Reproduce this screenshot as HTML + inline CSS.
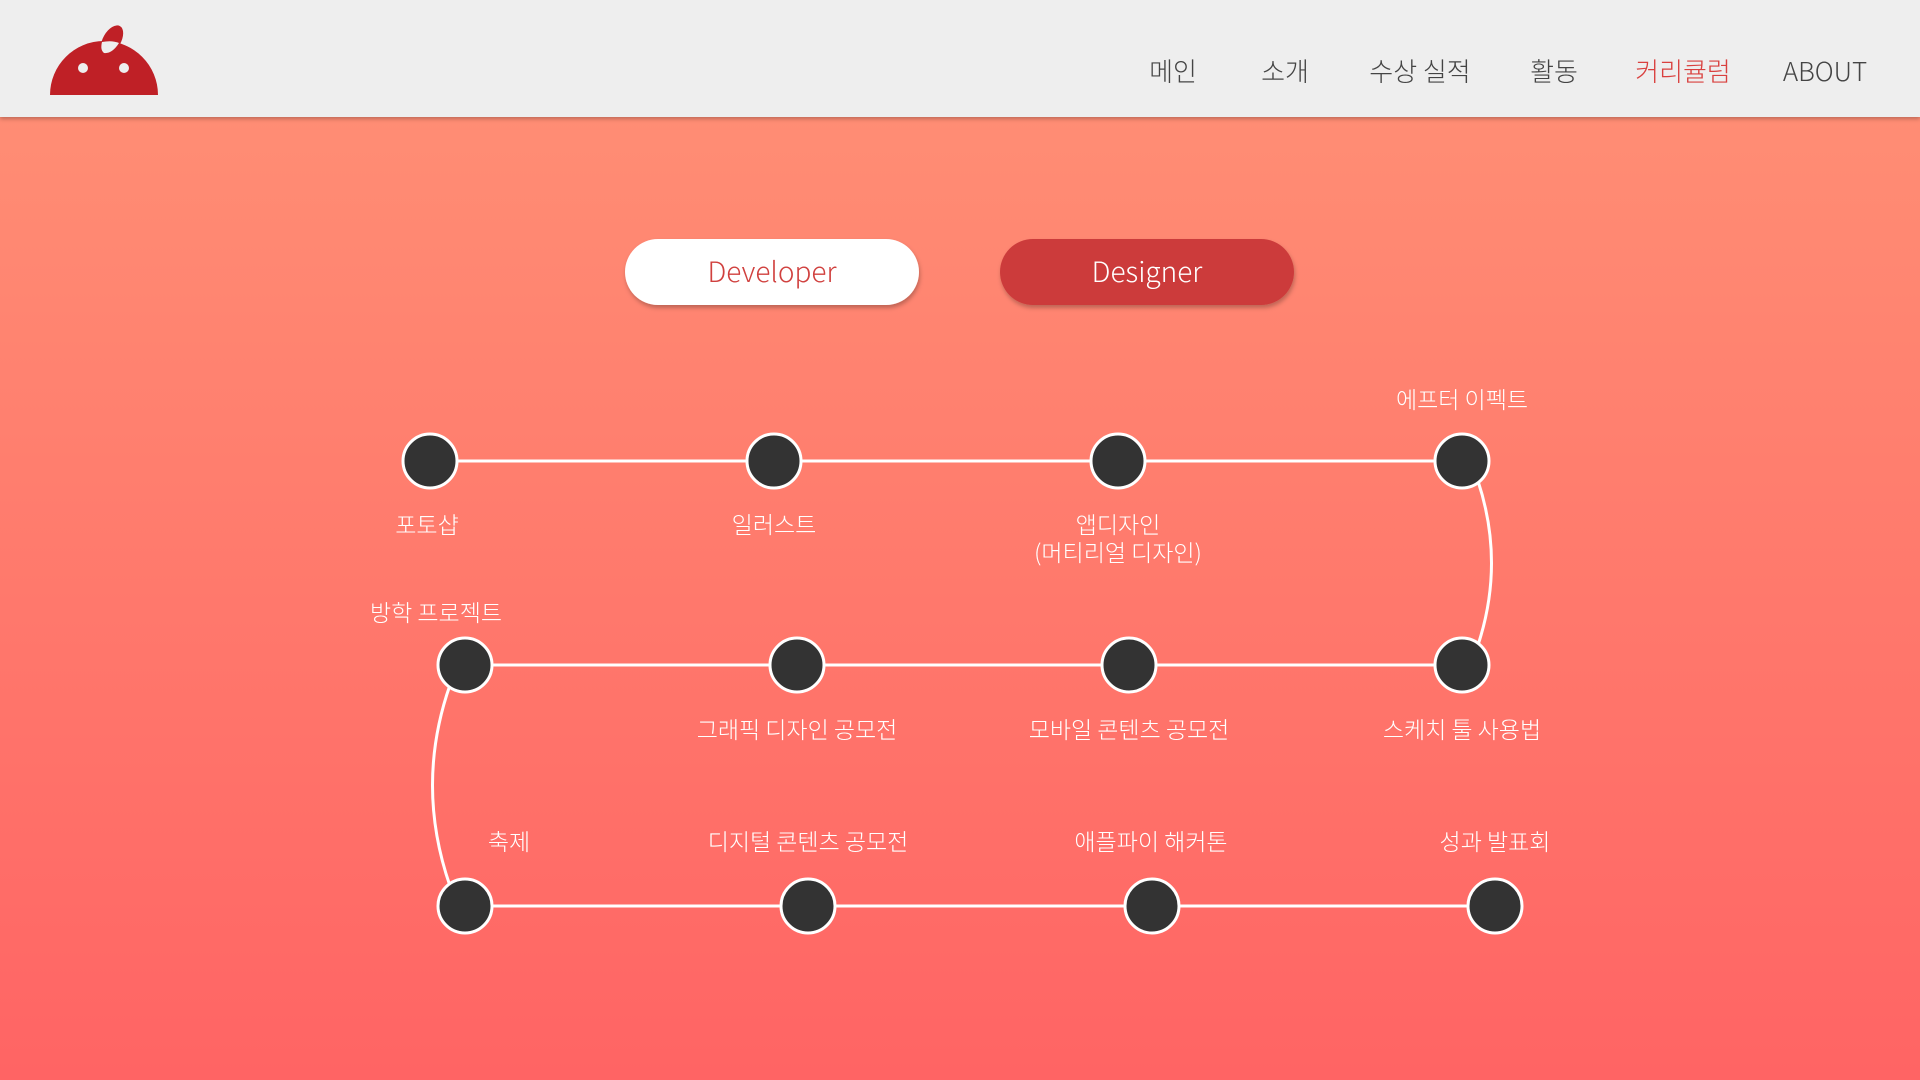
<!DOCTYPE html>
<html><head><meta charset="utf-8"><style>
html,body{margin:0;padding:0;width:1920px;height:1080px;overflow:hidden}
body{background:linear-gradient(180deg,#ff9276 0%,#ff7b6d 50%,#ff6464 100%);font-family:"Liberation Sans","Noto Sans CJK KR",sans-serif}
.hdr{position:absolute;left:0;top:0;width:1920px;height:117px;background:#eeeeee;box-shadow:0 2px 4px rgba(0,0,0,.25);z-index:2}
svg{position:absolute;left:0;top:0}
text{font-family:"Noto Sans CJK KR","Liberation Sans",sans-serif;font-weight:300}
</style></head><body>
<div class="hdr"></div>
<svg width="1920" height="1080" style="z-index:3">
  <path d="M50 95 A54 54 0 0 1 158 95 Z" fill="#bf2026"/>
  <ellipse cx="112" cy="40" rx="9" ry="16" transform="rotate(30 112 40)" fill="#bf2026"/>
  <path d="M102 42 Q112 40 119 43 Q112 54 104 53 Q100 50 102 42Z" fill="#eee"/>
  <circle cx="83" cy="68" r="5" fill="#eee"/>
  <circle cx="124" cy="68" r="5" fill="#eee"/>
  <g font-size="26" fill="#444" text-anchor="middle">
    <text x="1173" y="81">메인</text>
    <text x="1285" y="81">소개</text>
    <text x="1420" y="81">수상 실적</text>
    <text x="1554" y="81">활동</text>
    <text x="1683" y="81" fill="#d9403e">커리큘럼</text>
    <text x="1825" y="81">ABOUT</text>
  </g>
</svg>
<svg width="1920" height="1080" style="z-index:1">
  <defs><filter id="sh" x="-10%" y="-20%" width="120%" height="150%"><feDropShadow dx="1" dy="3" stdDeviation="2" flood-color="#000" flood-opacity=".25"/></filter></defs>
  <rect x="625" y="239" width="294" height="66" rx="33" fill="#fff" filter="url(#sh)"/>
  <text x="772" y="282" font-size="28" fill="#d0403e" text-anchor="middle">Developer</text>
  <rect x="1000" y="239" width="294" height="66" rx="33" fill="#cc3b3b" filter="url(#sh)"/>
  <text x="1147" y="282" font-size="28" fill="#fff" text-anchor="middle">Designer</text>

  <g stroke="#fff" stroke-width="3" fill="none">
    <line x1="430" y1="461" x2="1462" y2="461"/>
    <line x1="465" y1="665" x2="1462" y2="665"/>
    <line x1="465" y1="906" x2="1495" y2="906"/>
    <path d="M1478 481 Q1505 563 1478 645"/>
    <path d="M450 685 Q415 785 450 886"/>
  </g>
  <g fill="#333" stroke="#fff" stroke-width="3">
    <circle cx="430" cy="461" r="27"/><circle cx="774" cy="461" r="27"/><circle cx="1118" cy="461" r="27"/><circle cx="1462" cy="461" r="27"/>
    <circle cx="465" cy="665" r="27"/><circle cx="797" cy="665" r="27"/><circle cx="1129" cy="665" r="27"/><circle cx="1462" cy="665" r="27"/>
    <circle cx="465" cy="906" r="27"/><circle cx="808" cy="906" r="27"/><circle cx="1152" cy="906" r="27"/><circle cx="1495" cy="906" r="27"/>
  </g>
  <g font-size="23" fill="#fff" text-anchor="middle">
    <text x="427" y="533">포토샵</text>
    <text x="774" y="533">일러스트</text>
    <text x="1118" y="533">앱디자인</text>
    <text x="1118" y="561">(머티리얼 디자인)</text>
    <text x="1462" y="408">에프터 이펙트</text>
    <text x="436" y="621">방학 프로젝트</text>
    <text x="797" y="738">그래픽 디자인 공모전</text>
    <text x="1129" y="738">모바일 콘텐츠 공모전</text>
    <text x="1462" y="738">스케치 툴 사용법</text>
    <text x="509" y="850">축제</text>
    <text x="808" y="850">디지털 콘텐츠 공모전</text>
    <text x="1151" y="850">애플파이 해커톤</text>
    <text x="1495" y="850">성과 발표회</text>
  </g>
</svg>
</body></html>
